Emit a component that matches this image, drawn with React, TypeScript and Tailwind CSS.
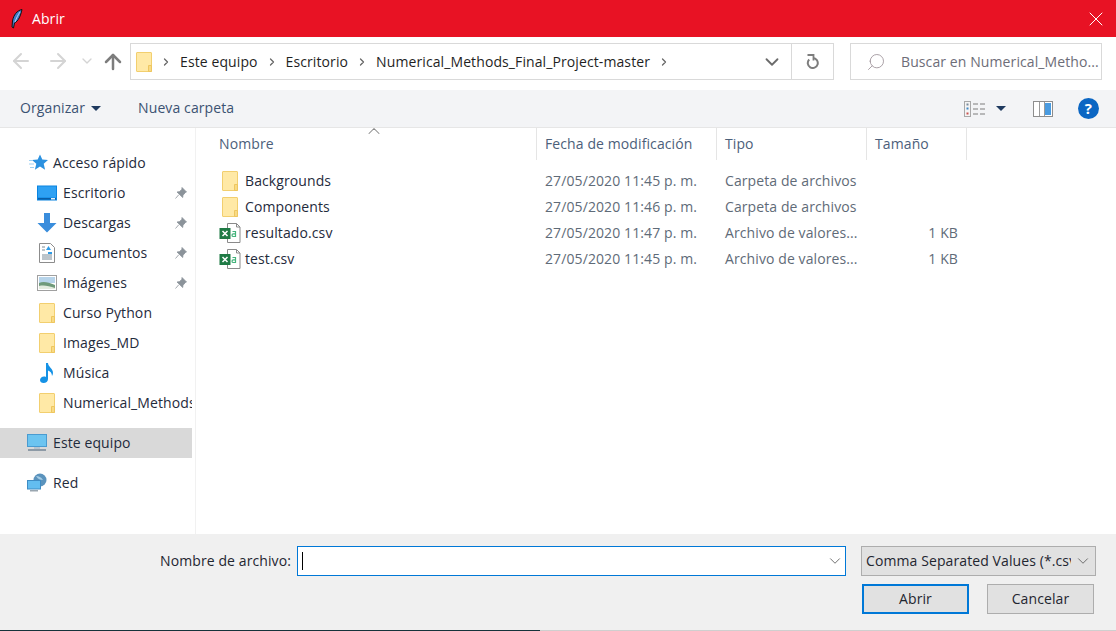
import { ArrowLeft, ArrowRight, ArrowUp, ChevronDown, ChevronRight, ChevronUp, Search, X } from "lucide-react";

function FolderIcon({ className = "" }: { className?: string }) {
  return (
    <svg viewBox="0 0 16 20" className={className}>
      <rect x="0.5" y="0.5" width="15" height="19" rx="0.5" fill="#ffe9a6" stroke="#f2cf6f" />
      <path d="M12.5 19.5v-6h3v6z" fill="#f8da84" stroke="#eec65f" />
    </svg>
  );
}

function ExcelIcon() {
  return (
    <svg viewBox="0 0 22 20" className="w-[22px] h-5 shrink-0">
      <path d="M8.5.5h9l3.5 3.500v15.500H8.500z" fill="#fff" stroke="#8a8a8a" />
      <path d="M17.500.5V4H21" fill="none" stroke="#8a8a8a" />
      <rect x="0.5" y="5" width="11" height="11" fill="#1f7a45" />
      <path d="M3.500 8l5 5M8.500 8l-5 5" stroke="#fff" strokeWidth="1.500" />
      <path d="M13.500 8.500h3v5h-2.200a1.300 1.300 0 010-2.600h2.200" fill="none" stroke="#42b37a" strokeWidth="1.200" />
    </svg>
  );
}

function StarIcon() {
  return (
    <svg viewBox="0 0 20 18" className="w-5 h-[18px]">
      <path d="M11 .5l2.300 5 5.700.5-4.300 3.800 1.400 6-5.100-3.200-5.100 3.200 1.400-6L3 6l5.700-.5z" fill="#2b91e0" />
      <path d="M0 6.500h4M0 10h5M1 13.500h4" stroke="#9fd0f2" strokeWidth="1" />
    </svg>
  );
}

function DesktopIcon() {
  return (
    <svg viewBox="0 0 20 16" className="w-5 h-4">
      <rect x="0" y="0.500" width="20" height="15" fill="#0a84e0" />
      <rect x="1" y="1.500" width="18" height="11" fill="#2ea1f3" />
      <rect x="1" y="13" width="18" height="1.500" fill="#0b5fa8" />
      <rect x="14" y="13" width="4" height="1.500" fill="#e6f3fc" />
    </svg>
  );
}

function DownloadIcon() {
  return (
    <svg viewBox="0 0 20 20" className="w-5 h-5">
      <path d="M7 0h6v10h6.500L10 19.500.5 10H7z" fill="#3a8ddc" />
    </svg>
  );
}

function DocumentIcon() {
  return (
    <svg viewBox="0 0 16 20" className="w-4 h-5">
      <path d="M.5.5h11l4 4v15H.5z" fill="#fff" stroke="#8c8c8c" />
      <path d="M3 4h3M3 7h3M3 12h10M3 14h10M3 16h10" stroke="#7a8a96" />
      <path d="M7 7l2.500-4L12 7z" fill="#2e9be6" />
      <path d="M9 9h4v2H9z" fill="#2e9be6" />
    </svg>
  );
}

function ImagesIcon() {
  return (
    <svg viewBox="0 0 20 16" className="w-5 h-4">
      <rect x="0.500" y="0.500" width="19" height="15" fill="#fff" stroke="#a0a0a0" />
      <rect x="2" y="2" width="16" height="6" fill="#b7d4ea" />
      <path d="M2 8c4-2 9-1 16 2v4H2z" fill="#6f9a7a" />
      <path d="M2 11c5-1 10 0 16 2v1H2z" fill="#e3ebde" />
    </svg>
  );
}

function MusicIcon() {
  return (
    <svg viewBox="0 0 14 20" className="w-3.5 h-5">
      <path d="M6 0h2c0 4 5 5 5 10 0 1-.4 2-1 3 0-3-2-5-4-5.500V16c0 2.500-2 4-4.500 4C1.500 20 0 18.800 0 17s2-3.500 4-3.500c.7 0 1.400.1 2 .4z" fill="#1592e6" />
    </svg>
  );
}

function MonitorIcon() {
  return (
    <svg viewBox="0 0 20 18" className="w-5 h-[18px]">
      <rect x="0.500" y="0.500" width="19" height="12" fill="#6cc4f0" stroke="#4a9bd0" />
      <rect x="7" y="13" width="6" height="2" fill="#b7c4ce" />
      <rect x="1" y="15" width="18" height="2" fill="#8d9aa6" />
    </svg>
  );
}

function NetworkIcon() {
  return (
    <svg viewBox="0 0 20 20" className="w-5 h-5">
      <circle cx="13" cy="7" r="6.500" fill="#5b93bd" />
      <path d="M9 3c3 0 5 1 7 4-3 0-5-1-7-4z" fill="#a5cde6" />
      <rect x="0.500" y="7.500" width="13" height="8.500" fill="#63bdf0" stroke="#3f8cc4" />
      <rect x="3" y="17" width="8" height="1.500" fill="#9aa6b0" />
    </svg>
  );
}

function PinIcon() {
  return (
    <svg viewBox="0 0 12 12" className="w-3 h-3">
      <path d="M7 .5l4.500 4.500-1.200.6-2.300 2.600-.3 2.300L2 5l2.300-.3 2.600-2.300zM3.800 7.700L.5 11.500" fill="#8b939a" stroke="#8b939a" strokeWidth="0.800" />
    </svg>
  );
}

function FeatherIcon() {
  return (
    <svg viewBox="0 0 12 20" className="w-3 h-5">
      <path d="M11 .5C6 1.500 2.500 6 1.500 12L1 18l1.500 1 1-5c4-2 6-7 7.500-13.500z" fill="#3f7fca" stroke="#111" strokeWidth="1" />
      <path d="M9 3C7 6 5.500 9 4 13" stroke="#b7d4f2" strokeWidth="1" fill="none" />
    </svg>
  );
}

function ViewIcon() {
  return (
    <svg viewBox="0 0 22 16" className="w-[22px] h-4">
      <rect x="0.500" y="0.500" width="6" height="15" fill="#f4f4f4" stroke="#a8a8a8" />
      <rect x="2.500" y="2.500" width="2" height="2" fill="#7a8a9a" />
      <rect x="2.500" y="6.500" width="2" height="2" fill="#3f88c5" />
      <rect x="2.500" y="11.500" width="2" height="2" fill="#c9504e" />
      <path d="M9 3h5M16 3h5M9 8h5M16 8h5M9 13h5M16 13h5" stroke="#7d7d7d" />
    </svg>
  );
}

function PreviewIcon() {
  return (
    <svg viewBox="0 0 20 16" className="w-5 h-4">
      <rect x="0.500" y="0.500" width="19" height="15" fill="#fff" stroke="#8d8d8d" />
      <rect x="12" y="2" width="6" height="12" fill="#4a9be0" />
      <path d="M6.500 1v14M11.500 1v14" stroke="#9a9a9a" />
    </svg>
  );
}

function RefreshIcon() {
  return (
    <svg viewBox="0 0 14 15" className="w-[14px] h-[15px]">
      <path d="M3.200 5.500A5 5 0 1 0 7 4" fill="none" stroke="#7d7d7d" strokeWidth="2" />
      <path d="M1.500 1h6v5.500" fill="none" stroke="#7d7d7d" strokeWidth="1.800" />
    </svg>
  );
}

const quickAccess = [
  { label: "Escritorio", icon: <DesktopIcon />, pinned: true },
  { label: "Descargas", icon: <DownloadIcon />, pinned: true },
  { label: "Documentos", icon: <DocumentIcon />, pinned: true },
  { label: "Imágenes", icon: <ImagesIcon />, pinned: true },
  { label: "Curso Python", icon: <FolderIcon className="w-4 h-5" />, pinned: false },
  { label: "Images_MD", icon: <FolderIcon className="w-4 h-5" />, pinned: false },
  { label: "Música", icon: <MusicIcon />, pinned: false },
  { label: "Numerical_Methods_Final", icon: <FolderIcon className="w-4 h-5" />, pinned: false },
];

const files = [
  { name: "Backgrounds", date: "27/05/2020 11:45 p. m.", type: "Carpeta de archivos", size: "", folder: true, h: "h-[27px]" },
  { name: "Components", date: "27/05/2020 11:46 p. m.", type: "Carpeta de archivos", size: "", folder: true, h: "h-[26px]" },
  { name: "resultado.csv", date: "27/05/2020 11:47 p. m.", type: "Archivo de valores...", size: "1 KB", folder: false, h: "h-[26px]" },
  { name: "test.csv", date: "27/05/2020 11:45 p. m.", type: "Archivo de valores...", size: "1 KB", folder: false, h: "h-[26px]" },
];

function Crumb({ label }: { label: string }) {
  return (
    <>
      <ChevronRight className="w-3 h-3 text-[#666]" strokeWidth={2.5} />
      <span className="pb-px text-[#1f1f1f] whitespace-nowrap">{label}</span>
    </>
  );
}

function HeaderCell({ label, className }: { label: string; className: string }) {
  return (
    <div className={`h-full flex items-center pb-px border-r border-[#e5e5e5] text-[#4c607a] ${className}`}>{label}</div>
  );
}

export default function App() {
  return (
    <div className="w-[1116px] h-[631px] overflow-hidden flex flex-col bg-white text-[14px] font-['Open_Sans','Noto_Sans',sans-serif] tracking-[0.1px]">
      <div className="h-[37px] shrink-0 bg-[#e81224] flex items-center pl-[11px] pr-[8px] text-white">
        <FeatherIcon />
        <span className="ml-[9px]">Abrir</span>
        <X className="ml-auto w-6 h-6" strokeWidth={1} />
      </div>

      <div className="h-[53px] shrink-0 flex items-start pt-[6px] pl-[9px]">
        <ArrowLeft className="mt-[6px] w-6 h-6 text-[#d4d4d4]" strokeWidth={2} />
        <ArrowRight className="mt-[6px] ml-[13px] w-6 h-6 text-[#d4d4d4]" strokeWidth={2} />
        <ChevronDown className="mt-[10px] ml-[9px] w-4 h-4 text-[#d4d4d4]" strokeWidth={2} />
        <ArrowUp className="mt-[7px] ml-[6px] w-6 h-6 text-[#7d7d7d]" strokeWidth={2.5} />
        <div className="ml-[5px] w-[704px] h-[37px] border border-[#d9d9d9] flex items-center">
          <div className="flex-1 flex items-center pl-[5px] gap-[8px]">
            <FolderIcon className="w-4 h-5" />
            <Crumb label="Este equipo" />
            <Crumb label="Escritorio" />
            <Crumb label="Numerical_Methods_Final_Project-master" />
            <ChevronRight className="w-3 h-3 text-[#666]" strokeWidth={2.5} />
          </div>
          <ChevronDown className="mr-[8px] w-[22px] h-[22px] text-[#6b6b6b]" strokeWidth={2} />
          <div className="w-[42px] h-full border-l border-[#d9d9d9] flex items-center justify-center">
            <RefreshIcon />
          </div>
        </div>
        <div className="ml-[16px] w-[252px] h-[37px] border border-[#d9d9d9] flex items-center pl-[15px] text-[#6d6d78]">
          <Search className="w-5 h-5 -scale-x-100 text-[#9a8f96]" strokeWidth={1} />
          <span className="ml-[15px] pb-px whitespace-nowrap">Buscar en Numerical_Metho...</span>
        </div>
      </div>

      <div className="h-[38px] shrink-0 bg-[#f3f4f6] border-b border-[#e6e6e6] flex items-center pl-[20px] pr-[17px] text-[#3b5272]">
        <span className="pb-[2px]">Organizar</span>
        <span className="ml-[6px] border-x-[5px] border-x-transparent border-t-[5px] border-t-[#1f3a5f]" />
        <span className="ml-[37px] pb-[2px]">Nueva carpeta</span>
        <div className="ml-auto flex items-center">
          <ViewIcon />
          <span className="ml-[10px] border-x-[5px] border-x-transparent border-t-[5px] border-t-[#1f3a5f]" />
          <div className="ml-[27px]"><PreviewIcon /></div>
          <div className="ml-[25px] w-[21px] h-[21px] rounded-full bg-[#0b66c3] text-white text-[15px] font-bold flex items-center justify-center">?</div>
        </div>
      </div>

      <div className="flex-1 min-h-0 flex">
        <div className="w-[196px] shrink-0 border-r border-[#f1f1f1] pr-[3px] pt-[20px] overflow-hidden text-[#1f2b3c]">
          <div className="h-[30px] flex items-center pl-[29px] gap-[4px]">
            <StarIcon />
            <span className="pb-px">Acceso rápido</span>
          </div>
          {quickAccess.map((item) => (
            <div key={item.label} className="h-[30px] flex items-center pl-[37px] relative">
              <div className="w-5 flex justify-center shrink-0">{item.icon}</div>
              <span className="ml-[6px] pb-px whitespace-nowrap overflow-hidden">{item.label}</span>
              {item.pinned && (
                <div className="absolute right-[5px]"><PinIcon /></div>
              )}
            </div>
          ))}
          <div className="mt-[10px] h-[30px] bg-[#d9d9d9] flex items-center pl-[27px] gap-[6px]">
            <MonitorIcon />
            <span className="pb-px">Este equipo</span>
          </div>
          <div className="mt-[10px] h-[30px] flex items-center pl-[27px] gap-[6px]">
            <NetworkIcon />
            <span className="pb-px">Red</span>
          </div>
        </div>

        <div className="flex-1 min-w-0">
          <div className="h-[32px] flex relative">
            <ChevronUp className="absolute left-[168px] -top-[7px] w-5 h-5 text-[#8a8a8a]" strokeWidth={1.25} />
            <HeaderCell label="Nombre" className="w-[341px] pl-[23px]" />
            <HeaderCell label="Fecha de modificación" className="w-[180px] pl-[8px]" />
            <HeaderCell label="Tipo" className="w-[150px] pl-[8px]" />
            <HeaderCell label="Tamaño" className="w-[100px] pl-[8px]" />
          </div>
          <div className="pt-[7px] text-[#1f2b3c]">
            {files.map((file) => (
              <div key={file.name} className={`flex items-center ${file.h}`}>
                <div className="w-[341px] flex items-center pl-[23px]">
                  <div className="w-[22px] flex justify-center shrink-0">
                    {file.folder ? <FolderIcon className="w-4 h-5" /> : <ExcelIcon />}
                  </div>
                  <span className="ml-[4px] pb-px">{file.name}</span>
                </div>
                <div className="w-[180px] pl-[8px] pb-px text-[#5f6b78]">{file.date}</div>
                <div className="w-[150px] pl-[8px] pb-px text-[#5f6b78] whitespace-nowrap">{file.type}</div>
                <div className="w-[91px] pb-px text-right text-[#5f6b78]">{file.size}</div>
              </div>
            ))}
          </div>
        </div>
      </div>

      <div className="h-[97px] shrink-0 bg-[#f0f0f0] flex flex-col relative">
        <div className="flex items-center pt-[12px] pl-[160px]">
          <span className="w-[131px] pb-px text-[#1f2630] whitespace-nowrap">Nombre de archivo:</span>
          <div className="ml-[6px] w-[549px] h-[30px] bg-white border border-[#0078d7] flex items-center pl-[4px] pr-[1px]">
            <span className="w-px h-[18px] bg-black" />
            <ChevronDown className="ml-auto w-[18px] h-[18px] text-[#666]" strokeWidth={1.25} />
          </div>
          <div className="ml-[15px] w-[235px] h-[30px] bg-[#e1e1e1] border border-[#adadad] flex items-center pl-[4px] pr-[3px] text-[#1f2630]">
            <span className="w-[205px] pb-px overflow-hidden whitespace-nowrap">Comma Separated Values (*.csv)</span>
            <ChevronDown className="ml-auto w-[18px] h-[18px] text-[#666]" strokeWidth={1.25} />
          </div>
        </div>
        <div className="flex pt-[8px] pl-[862px] text-[#1f2630]">
          <button type="button" className="w-[107px] h-[30px] pb-[2px] bg-[#e1e1e1] border-2 border-[#0078d7]">Abrir</button>
          <button type="button" className="ml-[18px] w-[107px] h-[30px] pb-[2px] bg-[#e1e1e1] border border-[#adadad]">Cancelar</button>
        </div>
        <div className="mt-auto h-px flex">
          <div className="w-[540px] bg-[#16323a]" />
          <div className="flex-1 bg-[#cfcfcf]" />
        </div>
      </div>
    </div>
  );
}
